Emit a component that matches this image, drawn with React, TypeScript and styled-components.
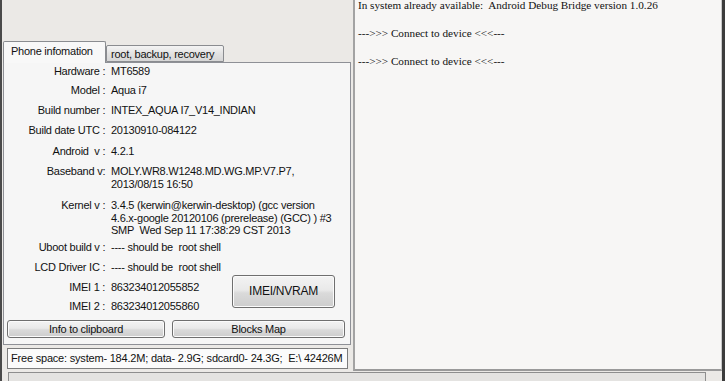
import React from "react";
import styled, { createGlobalStyle } from "styled-components";

const Global = createGlobalStyle`
  html, body { margin: 0; padding: 0; background: #ebe9e6; }
  body { width: 725px; height: 381px; overflow: hidden; }
`;

const Window = styled.div`
  width: 725px;
  height: 381px;
  box-sizing: border-box;
  background: #ebe9e6;
  border-left: 2px solid #4a4a4a;
  border-right: 3px solid #3c3c3c;
  display: flex;
  flex-direction: column;
  overflow: hidden;
  font-family: "Liberation Sans", Arial, sans-serif;
  font-size: 11px;
  letter-spacing: -0.25px;
  color: #111;
`;

const Main = styled.div`
  display: flex;
  height: 371px;
  flex-shrink: 0;
`;

const LeftColumn = styled.div`
  width: 351px;
  flex-shrink: 0;
  display: flex;
  flex-direction: column;
  padding-top: 41px;
  padding-left: 1px;
  box-sizing: border-box;
`;

const TabStrip = styled.div`
  display: flex;
  align-items: flex-end;
  height: 21px;
  position: relative;
  z-index: 1;
`;

const Tab = styled.div<{ $active?: boolean }>`
  box-sizing: border-box;
  height: ${(p) => (p.$active ? "22px" : "17px")};
  margin-bottom: ${(p) => (p.$active ? "-1px" : "0")};
  padding: ${(p) => (p.$active ? "3px 0 0 7px" : "2px 0 0 4px")};
  width: ${(p) => (p.$active ? "103px" : "118px")};
  border: 1px solid #8a8c90;
  border-bottom: ${(p) => (p.$active ? "none" : "1px solid #8a8c90")};
  border-radius: 2px 2px 0 0;
  background: ${(p) =>
    p.$active ? "#f8f8f8" : "linear-gradient(#f4f4f4, #e2e2e2 50%, #d6d6d6)"};
  white-space: nowrap;
  font-size: 11px;
  line-height: 13px;
`;

const TabPage = styled.div`
  width: 348px;
  height: 283px;
  box-sizing: border-box;
  border: 1px solid #8e9096;
  background: #f6f6f6;
  padding: 2px 0 0 0;
  display: flex;
  flex-direction: column;
`;

const InfoRow = styled.div<{ $gap: number }>`
  display: flex;
  margin-top: ${(p) => p.$gap}px;
  line-height: 13px;
`;

const Label = styled.div`
  width: 104px;
  flex-shrink: 0;
  text-align: right;
  white-space: pre;
`;

const Value = styled.div<{ $lh?: number }>`
  padding-left: 3px;
  white-space: pre;
  line-height: ${(p) => p.$lh ?? 13}px;
`;

const ImeiBlock = styled.div`
  display: flex;
  align-items: flex-start;
`;

const ImeiRows = styled.div`
  width: 228px;
  display: flex;
  flex-direction: column;
`;

const GrayButton = styled.div<{ $w: number; $h: number }>`
  box-sizing: border-box;
  width: ${(p) => p.$w}px;
  height: ${(p) => p.$h}px;
  border: 1px solid #6f6f6f;
  border-radius: 3px;
  background: linear-gradient(#f3f3f3, #e9e9e9 45%, #dadada 55%, #cdcdcd);
  box-shadow: inset 0 0 0 1px #fbfbfb;
  display: flex;
  align-items: center;
  justify-content: center;
  font-size: ${(p) => (p.$h > 25 ? "12px" : "11px")};
  white-space: nowrap;
`;

const ButtonRow = styled.div`
  display: flex;
  gap: 7px;
  margin-top: 7px;
  padding-left: 3px;
`;

const FreeSpace = styled.div`
  margin-top: 3px;
  margin-left: 4px;
  width: 341px;
  height: 21px;
  box-sizing: border-box;
  border: 1px solid #7c7c7c;
  background: #fbfbfb;
  padding: 3px 0 0 3px;
  white-space: pre;
  overflow: hidden;
  font-size: 11px;
  letter-spacing: -0.2px;
  line-height: 13px;
`;

const LogPane = styled.div`
  width: 370px;
  height: 371px;
  box-sizing: border-box;
  border-left: 2px solid #a3a3a3;
  border-right: 1px solid #c8c8c8;
  border-bottom: 2px solid #9a9a9a;
  background: #f7f6f5;
  padding: 0 0 0 3px;
  font-family: "Liberation Serif", "Times New Roman", serif;
  font-size: 11.2px;
  letter-spacing: 0;
  overflow: hidden;
`;

const LogText = styled.div`
  margin-top: -2px;
  white-space: pre;
  line-height: 14px;
`;

const StatusBar = styled.div`
  margin: 1px 0 0 6px;
  width: 698px;
  height: 12px;
  box-sizing: border-box;
  border: 1px solid #8e8e8e;
  border-bottom: none;
  background: #e4e3e1;
`;

const rows: { label: string; value: string; gap: number; lh?: number }[] = [
  { label: "Hardware : ", value: "MT6589", gap: 0 },
  { label: "Model : ", value: "Aqua i7", gap: 6 },
  { label: "Build number : ", value: "INTEX_AQUA I7_V14_INDIAN", gap: 7 },
  { label: "Build date UTC : ", value: "20130910-084122", gap: 7 },
  { label: "Android  v : ", value: "4.2.1", gap: 8 },
  {
    label: "Baseband v: ",
    value: "MOLY.WR8.W1248.MD.WG.MP.V7.P7,\n2013/08/15 16:50",
    gap: 7,
  },
  {
    label: "Kernel v : ",
    value:
      "3.4.5 (kerwin@kerwin-desktop) (gcc version\n4.6.x-google 20120106 (prerelease) (GCC) ) #3\nSMP  Wed Sep 11 17:38:29 CST 2013",
    gap: 8,
    lh: 12.5,
  },
  { label: "Uboot build v : ", value: "---- should be  root shell", gap: 4 },
  { label: "LCD Driver IC : ", value: "---- should be  root shell", gap: 7 },
];

export default function App() {
  return (
    <>
      <Global />
      <Window>
        <Main>
          <LeftColumn>
            <TabStrip>
              <Tab $active>Phone infomation</Tab>
              <Tab>root, backup, recovery</Tab>
            </TabStrip>
            <TabPage>
              {rows.map((r) => (
                <InfoRow key={r.label} $gap={r.gap}>
                  <Label>{r.label}</Label>
                  <Value $lh={r.lh}>{r.value}</Value>
                </InfoRow>
              ))}
              <ImeiBlock>
                <ImeiRows>
                  <InfoRow $gap={7}>
                    <Label>IMEI 1 : </Label>
                    <Value>863234012055852</Value>
                  </InfoRow>
                  <InfoRow $gap={6}>
                    <Label>IMEI 2 : </Label>
                    <Value>863234012055860</Value>
                  </InfoRow>
                </ImeiRows>
                <GrayButton $w={103} $h={33} style={{ marginTop: 1 }}>
                  IMEI/NVRAM
                </GrayButton>
              </ImeiBlock>
              <ButtonRow>
                <GrayButton $w={158} $h={18}>Info to clipboard</GrayButton>
                <GrayButton $w={173} $h={18}>Blocks Map</GrayButton>
              </ButtonRow>
            </TabPage>
            <FreeSpace>
              {"Free space: system- 184.2M; data- 2.9G; sdcard0- 24.3G;  E:\\ 42426M"}
            </FreeSpace>
          </LeftColumn>
          <LogPane>
            <LogText>
              {"In system already available:  Android Debug Bridge version 1.0.26\n\n--->>> Connect to device <<<---\n\n--->>> Connect to device <<<---"}
            </LogText>
          </LogPane>
        </Main>
        <StatusBar />
      </Window>
    </>
  );
}
